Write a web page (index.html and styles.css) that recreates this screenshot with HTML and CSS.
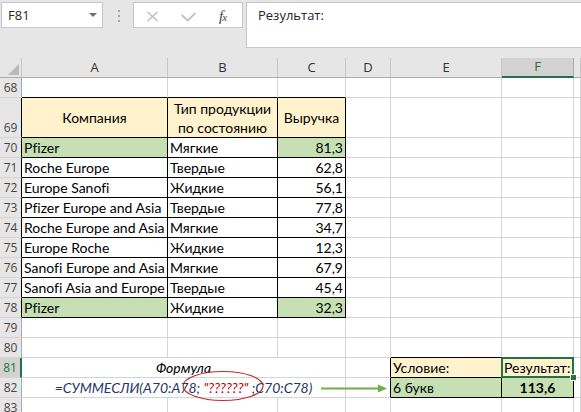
FILE: index.html
```html
<!DOCTYPE html>
<html lang="ru">
<head>
<meta charset="utf-8">
<title>Excel — СУММЕСЛИ</title>
<link rel="stylesheet" href="styles.css">
</head>
<body>
<div class="app">
  <div class="fbar">
    <div class="namebox"><span>F81</span><i class="dd"></i></div>
    <div class="grip"><i></i><i></i><i></i></div>
    <div class="fbtns">
      <svg class="ico-x" width="13" height="11" viewBox="0 0 13 11"><path d="M1.5 1 L11.5 10 M11.5 1 L1.5 10" fill="none" stroke="#bdbdbd" stroke-width="1.4"/></svg>
      <svg class="ico-ok" width="15" height="10" viewBox="0 0 15 10"><path d="M0.7 3 L6.8 8.6 L14.4 0.8" fill="none" stroke="#bdbdbd" stroke-width="1.7"/></svg>
      <span class="fx">f<span class="fxx">x</span></span>
    </div>
    <div class="finput">Результат:</div>
  </div>

  <div class="sheet">
    <div class="corner"><i class="tri"></i></div>
    <div class="h">A</div><div class="h">B</div><div class="h">C</div><div class="h">D</div><div class="h">E</div><div class="h hs">F</div><div class="h"></div>

    <div class="rh">68</div><div class="kb"></div><div class="kb"></div><div class="kb"></div><div></div><div></div><div></div><div></div>

    <div class="rh kr">69</div>
    <div class="k or c mid">Компания</div>
    <div class="k or two"><span>Тип продукции</span><span>по состоянию</span></div>
    <div class="k or c mid">Выручка</div>
    <div></div><div></div><div></div><div></div>

    <div class="rh kr">70</div><div class="k gr">Pfizer</div><div class="k">Мягкие</div><div class="k gr r">81,3</div><div></div><div></div><div></div><div></div>
    <div class="rh kr">71</div><div class="k">Roche Europe</div><div class="k">Твердые</div><div class="k r">62,8</div><div></div><div></div><div></div><div></div>
    <div class="rh kr">72</div><div class="k">Europe Sanofi</div><div class="k">Жидкие</div><div class="k r">56,1</div><div></div><div></div><div></div><div></div>
    <div class="rh kr">73</div><div class="k">Pfizer Europe and Asia</div><div class="k">Твердые</div><div class="k r">77,8</div><div></div><div></div><div></div><div></div>
    <div class="rh kr">74</div><div class="k">Roche Europe and Asia</div><div class="k">Мягкие</div><div class="k r">34,7</div><div></div><div></div><div></div><div></div>
    <div class="rh kr">75</div><div class="k">Europe Roche</div><div class="k">Жидкие</div><div class="k r">12,3</div><div></div><div></div><div></div><div></div>
    <div class="rh kr">76</div><div class="k">Sanofi Europe and Asia</div><div class="k">Мягкие</div><div class="k r">67,9</div><div></div><div></div><div></div><div></div>
    <div class="rh kr">77</div><div class="k">Sanofi Asia and Europe</div><div class="k">Твердые</div><div class="k r">45,4</div><div></div><div></div><div></div><div></div>
    <div class="rh kr">78</div><div class="k gr">Pfizer</div><div class="k">Жидкие</div><div class="k gr r">32,3</div><div></div><div></div><div></div><div></div>

    <div class="rh">79</div><div></div><div></div><div></div><div></div><div></div><div></div><div></div>
    <div class="rh">80</div><div></div><div></div><div></div><div></div><div class="kb"></div><div class="kb"></div><div></div>

    <div class="rh rs">81</div>
    <div class="m c it">Формула</div>
    <div class="kr"></div>
    <div class="k or">Условие:</div>
    <div class="k or sel">Результат:<span class="selbox"></span><span class="handle"></span></div>
    <div></div>

    <div class="rh">82</div>
    <div class="m c it navy"><span>=СУММЕСЛИ(A70:A78; <span class="red">"??????"</span> ;C70:C78)</span></div>
    <div class="kr"></div>
    <div class="k gr">6 букв</div>
    <div class="k gr c b">113,6</div>
    <div></div>

    <div class="rh">83</div><div></div><div></div><div></div><div></div><div></div><div></div><div></div>
  </div>

  <svg class="annot" width="581" height="412" viewBox="0 0 581 412">
    <ellipse cx="223" cy="386" rx="40" ry="14.5" fill="none" stroke="#c3262e" stroke-width="1.2"/>
    <line x1="321" y1="388.5" x2="380" y2="388.5" stroke="#70ad47" stroke-width="2"/>
    <polygon points="378,384.5 387,388.5 378,392.5" fill="#70ad47"/>
  </svg>
</div>
</body>
</html>
```

FILE: styles.css
```css
* { box-sizing: border-box; }
html, body { margin: 0; padding: 0; }
body {
  width: 581px;
  height: 412px;
  overflow: hidden;
  background: #e6e6e6;
  font-family: Lato, "Noto Sans", sans-serif;
  font-variant-ligatures: none;
}
.app {
  position: relative;
  width: 581px;
  height: 412px;
  overflow: hidden;
  background: #e6e6e6;
}

/* ---------- formula bar ---------- */
.fbar {
  height: 58px;
  display: flex;
  align-items: flex-start;
  padding: 2px 0 0 1px;
  font-family: "Open Sans", sans-serif;
  font-size: 13px;
  line-height: 24px;
  color: #262626;
}
.namebox {
  width: 102px;
  height: 26px;
  background: #fff;
  border: 1px solid #c6c6c6;
  display: flex;
  align-items: center;
  justify-content: space-between;
  padding: 0 5px 0 6px;
}
.dd {
  width: 0;
  height: 0;
  border-left: 4px solid transparent;
  border-right: 4px solid transparent;
  border-top: 4px solid #6d6d6d;
}
.grip {
  margin-left: 15px;
  padding-top: 8px;
  display: flex;
  flex-direction: column;
  gap: 3px;
}
.grip i {
  display: block;
  width: 2px;
  height: 2px;
  background: #a6a6a6;
}
.fbtns {
  margin-left: 13px;
  width: 110px;
  height: 26px;
  background: #fff;
  border: 1px solid #c6c6c6;
  display: flex;
  align-items: center;
  padding: 3px 0 0 12px;
}
.ico-ok { margin-left: 22px; }
.fx {
  margin-left: 23px;
  font-family: "Liberation Serif", "DejaVu Serif", serif;
  font-style: italic;
  font-size: 15px;
  line-height: 15px;
  color: #444;
  letter-spacing: -1px;
}
.fxx { font-size: 11px; }
.finput {
  flex: 1;
  margin-left: 3px;
  margin-right: -2px;
  height: 46px;
  background: #fff;
  border: 1px solid #c6c6c6;
  padding-left: 11px;
}

/* ---------- sheet ---------- */
.sheet {
  display: grid;
  grid-template-columns: 22px 146px 110px 68px 45px 111px 72px 1fr;
  grid-template-rows: 20px 20px 40px repeat(14, 20px);
  background: #fff;
}
:where(.sheet > div) {
  display: flex;
  align-items: flex-end;
  border-right: 1px solid #d4d4d4;
  border-bottom: 1px solid #d4d4d4;
  background: #fff;
  font-size: 14px;
  line-height: 19px;
  white-space: nowrap;
  overflow: hidden;
  padding: 0 2px;
  color: #000;
}
.corner {
  background: #e6e6e6;
  border-right-color: #c6c6c6;
  border-bottom-color: #ababab;
  justify-content: flex-end;
  padding: 0 2px 2px 0;
}
.tri {
  display: block;
  width: 0;
  height: 0;
  border-left: 11px solid transparent;
  border-bottom: 11px solid #b9b9b9;
}
.h {
  background: #e6e6e6;
  border-right-color: #c6c6c6;
  border-bottom-color: #ababab;
  font-family: "Open Sans", sans-serif;
  font-size: 13px;
  color: #333;
  justify-content: center;
}
.hs {
  background: #d2d2d2;
  border-right-color: #ababab;
  border-bottom: 2px solid #217346;
  color: #217346;
}
.rh {
  background: #e6e6e6;
  border-right-color: #ababab;
  border-bottom-color: #d4d4d4;
  font-family: "Open Sans", sans-serif;
  font-size: 12px;
  color: #444;
  justify-content: center;
  padding: 0;
}
.rs {
  background: #d2d2d2;
  border-right: 2px solid #217346;
  color: #217346;
}
.kb { border-bottom-color: #000; }
.kr { border-right-color: #000; }
.k { border-right-color: #000; border-bottom-color: #000; }
.or { background: #fff2cc; }
.gr { background: #c6e0b4; }
.c { justify-content: center; }
.r { justify-content: flex-end; }
.mid { align-items: center; }
.two {
  flex-direction: column;
  align-items: center;
  justify-content: flex-end;
}
.m { grid-column: span 3; }
.it { font-style: italic; }
.b { font-weight: bold; }
.navy { color: #1f3864; }
.red { color: #c00000; }

.sel {
  position: relative;
  overflow: visible;
}
.selbox {
  position: absolute;
  top: -1px;
  left: -1px;
  right: -1px;
  bottom: -1px;
  border: 2px solid #217346;
  z-index: 2;
}
.handle {
  position: absolute;
  left: 68px;
  top: 16px;
  width: 7px;
  height: 7px;
  background: #217346;
  border: 1px solid #fff;
  z-index: 3;
}

.annot {
  position: absolute;
  left: 0;
  top: 0;
  pointer-events: none;
}
```
